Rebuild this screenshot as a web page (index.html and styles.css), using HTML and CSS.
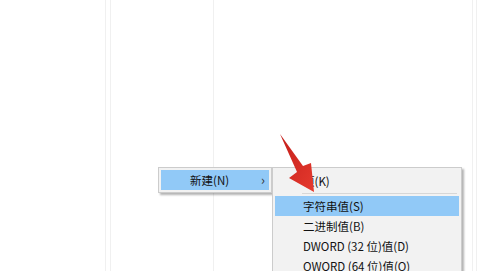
FILE: index.html
```html
<!DOCTYPE html>
<html lang="zh-CN">
  <head>
    <meta charset="UTF-8" />
    <meta name="viewport" content="width=device-width, initial-scale=1.0" />
    <title>注册表 新建</title>
    <link rel="stylesheet" href="styles.css">
  </head>

  <body>
    <div class="columns">
      <div class="col col-a"></div>
      <div class="col col-b"></div>
      <div class="col col-c"></div>
      <div class="col col-d"></div>
      <div class="col col-e"></div>
    </div>

    <div class="menu menu-main">
      <div class="item active">
        <span>新建(N)</span>
        <span class="chevron">&#x203A;</span>
      </div>
    </div>

    <div class="menu menu-sub">
      <div class="item">项(K)</div>
      <div class="sep"></div>
      <div class="item active">字符串值(S)</div>
      <div class="item">二进制值(B)</div>
      <div class="item">DWORD (32 位)值(D)</div>
      <div class="item">QWORD (64 位)值(Q)</div>
    </div>

    <svg class="arrow" width="500" height="271" viewBox="0 0 500 271">
      <defs>
        <linearGradient id="red" x1="0" y1="0" x2="1" y2="1">
          <stop offset="0" stop-color="#c41f1b" />
          <stop offset="1" stop-color="#e63a2e" />
        </linearGradient>
      </defs>
      <polygon points="280,134 303,166 311,163 314,192 289,178 297,172" fill="url(#red)" />
    </svg>
  </body>
</html>
```

FILE: styles.css
```css
body {
  margin: 0;
  width: 500px;
  height: 271px;
  overflow: hidden;
  background-color: #fff;
  font-family: "Microsoft YaHei", "Noto Sans CJK SC", "Liberation Sans", sans-serif;
  position: relative;
}

.columns {
  display: flex;
  height: 271px;
}

.col {
  border-right: 1px solid #f0f0f0;
}

.col-a {
  width: 105px;
}

.col-b {
  width: 4px;
}

.col-c {
  width: 102px;
}

.col-d {
  width: 258px;
}

.col-e {
  width: 3px;
}

.menu {
  position: absolute;
  background-color: #f2f2f2;
  border: 1px solid #cccccc;
  padding: 2px;
  box-shadow: 2px 2px 2px rgba(0, 0, 0, 0.3);
  font-size: 11.5px;
  color: #111;
}

.menu-main {
  left: 158px;
  top: 167px;
  width: 108px;
}

.menu-sub {
  left: 272px;
  top: 167px;
  width: 184px;
}

.item {
  height: 20px;
  line-height: 20px;
  padding-left: 28px;
  display: flex;
  justify-content: space-between;
}

.menu-main .item {
  padding-left: 29px;
}

.menu-sub .item:first-child {
  height: 22px;
  line-height: 22px;
}

.active {
  background-color: #91c9f7;
}

.chevron {
  padding-right: 4px;
  font-size: 13px;
  color: #333;
}

.sep {
  height: 1px;
  background-color: #d7d7d7;
  margin: 1px 2px 2px 27px;
}

.arrow {
  position: absolute;
  left: 0;
  top: 0;
}
```
